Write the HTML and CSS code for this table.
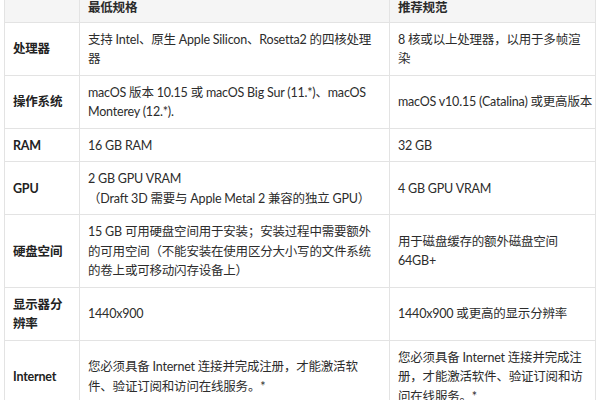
FILE: index.html
```html
<!DOCTYPE html>
<html lang="zh-CN">
<head>
<meta charset="utf-8">
<title>系统要求</title>
<link rel="stylesheet" href="styles.css">
</head>
<body>
<div class="wrap">
<table class="spec">
  <colgroup>
    <col class="c-label">
    <col class="c-min">
    <col class="c-rec">
  </colgroup>
  <thead>
    <tr>
      <th class="label"></th>
      <th>最低规格</th>
      <th>推荐规范</th>
    </tr>
  </thead>
  <tbody>
    <tr>
      <td class="label">处理器</td>
      <td>支持 Intel、原生 Apple Silicon、Rosetta2 的四核处理<br>器</td>
      <td>8 核或以上处理器，以用于多帧渲<br>染</td>
    </tr>
    <tr>
      <td class="label">操作系统</td>
      <td>macOS 版本 10.15 或 macOS Big Sur (11.*)、macOS<br>Monterey (12.*).</td>
      <td>macOS v10.15 (Catalina) 或更高版本</td>
    </tr>
    <tr>
      <td class="label">RAM</td>
      <td>16 GB RAM</td>
      <td>32 GB</td>
    </tr>
    <tr>
      <td class="label">GPU</td>
      <td>2 GB GPU VRAM<br>（Draft 3D 需要与 Apple Metal 2 兼容的独立 GPU）</td>
      <td>4 GB GPU VRAM</td>
    </tr>
    <tr>
      <td class="label">硬盘空间</td>
      <td>15 GB 可用硬盘空间用于安装；安装过程中需要额外<br>的可用空间（不能安装在使用区分大小写的文件系统<br>的卷上或可移动闪存设备上）</td>
      <td>用于磁盘缓存的额外磁盘空间<br>64GB+</td>
    </tr>
    <tr>
      <td class="label">显示器分<br>辨率</td>
      <td>1440x900</td>
      <td>1440x900 或更高的显示分辨率</td>
    </tr>
    <tr>
      <td class="label">Internet</td>
      <td>您必须具备 Internet 连接并完成注册，才能激活软<br>件、验证订阅和访问在线服务。*</td>
      <td>您必须具备 Internet 连接并完成注<br>册，才能激活软件、验证订阅和访<br>问在线服务。*</td>
    </tr>
  </tbody>
</table>
</div>
</body>
</html>
```
FILE: styles.css
```css
html, body {
  margin: 0;
  padding: 0;
  background: #ffffff;
}

body {
  font-family: "Lato", "Noto Sans CJK SC", sans-serif;
  font-size: 12.5px;
  letter-spacing: -0.2px;
  color: #2c2c2c;
  overflow: hidden;
}

.wrap {
  padding-left: 4px;
  margin-top: -9px;
}

.spec {
  table-layout: fixed;
  border-collapse: separate;
  border-spacing: 0;
  width: 592px;
}

.c-label { width: 76px; }
.c-min { width: 310px; }
.c-rec { width: 206px; }

.spec th,
.spec td {
  box-sizing: border-box;
  padding: 7px 8px 6px;
  line-height: 19.5px;
  text-align: left;
  vertical-align: middle;
  white-space: nowrap;
  border-right: 1px solid #e3e3e3;
  border-bottom: 1px solid #e3e3e3;
  font-weight: 400;
}

.spec th:first-child,
.spec td:first-child {
  border-left: 1px solid #e3e3e3;
}

.spec thead th {
  background: #f5f5f5;
  font-weight: 700;
  padding-bottom: 4px;
  color: #2a2a2a;
}

.spec td.label {
  font-weight: 700;
  color: #222222;
}
```
